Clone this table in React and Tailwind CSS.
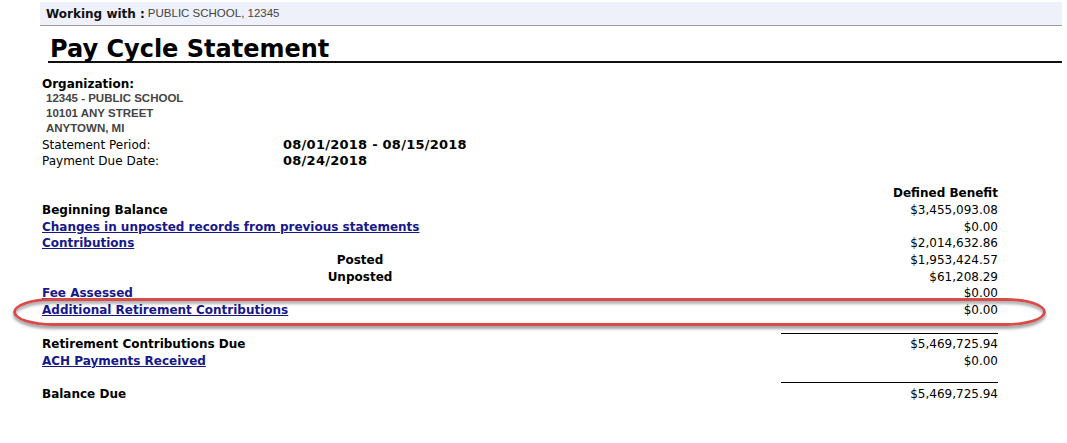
export default function App() {
  const verdana = "font-['DejaVu_Sans',Verdana,sans-serif]";
  const arial = "font-['Liberation_Sans',Arial,sans-serif]";
  const link = "text-[#17178c] underline font-bold";

  const rows = [
    { label: "Beginning Balance", amount: "$3,455,093.08" },
    { label: "Changes in unposted records from previous statements", amount: "$0.00", link: true },
    { label: "Contributions", amount: "$2,014,632.86", link: true },
    { label: "Posted", amount: "$1,953,424.57", sub: true },
    { label: "Unposted", amount: "$61,208.29", sub: true },
    { label: "Fee Assessed", amount: "$0.00", link: true },
    { label: "Additional Retirement Contributions", amount: "$0.00", link: true },
  ];

  return (
    <div className={`relative w-[1067px] h-[443px] bg-white text-black overflow-hidden ${verdana}`}>
      {/* Working with bar */}
      <div className="mt-[2px] ml-[40px] w-[1022px] h-[24px] bg-[#eef0fa] border-b border-[#9a9aa0] flex items-center pl-[6px] pt-[1px]">
        <span className="text-[12px] font-bold text-[#111]">Working with :</span>
        <span className={`ml-[3px] text-[11.5px] text-[#444] ${arial}`}>PUBLIC SCHOOL, 12345</span>
      </div>

      {/* Title */}
      <div className="ml-[48px] w-[1014px] mt-[9px] border-b-2 border-[#111] pl-[2px] h-[28px] flex items-end">
        <h1 className="text-[24px] font-bold leading-[28px] translate-y-[2px]">Pay Cycle Statement</h1>
      </div>

      {/* Organization */}
      <div className="ml-[42px] mt-[14px] text-[12px]">
        <div className="font-bold leading-[14px] h-[14px]">Organization:</div>
        <div className={`pl-[4px] text-[11.5px] font-bold text-[#444] leading-[15px] ${arial}`}>
          <div>12345 - PUBLIC SCHOOL</div>
          <div>10101 ANY STREET</div>
          <div>ANYTOWN, MI</div>
        </div>
        <div className="flex items-center leading-[16px] h-[16px] mt-[1px]">
          <span className="w-[241px]">Statement Period:</span>
          <span className="font-bold text-[13px] tracking-[0.25px]">08/01/2018 - 08/15/2018</span>
        </div>
        <div className="flex items-center leading-[16px] h-[16px]">
          <span className="w-[241px]">Payment Due Date:</span>
          <span className="font-bold text-[13px] tracking-[0.25px]">08/24/2018</span>
        </div>
      </div>

      {/* Balances */}
      <div className="ml-[42px] w-[956px] mt-[16px] text-[12px]">
        <div className="flex justify-end h-[17px] leading-[17px] font-bold">Defined Benefit</div>
        {rows.map((r) => (
          <div key={r.label} className="flex h-[16.7px] leading-[17px]">
            {r.sub ? (
              <span className="w-[636px] text-center font-bold">{r.label}</span>
            ) : (
              <span className={r.link ? link : "font-bold"}>{r.label}</span>
            )}
            <span className="ml-auto">{r.amount}</span>
          </div>
        ))}
        <div className="flex justify-end h-[17px]">
          <div className="w-[217px] mt-[14px] border-b border-black h-[1px]" />
        </div>
        <div className="flex h-[17px] leading-[17px]">
          <span className="font-bold">Retirement Contributions Due</span>
          <span className="ml-auto">$5,469,725.94</span>
        </div>
        <div className="flex h-[17px] leading-[17px]">
          <span className={link}>ACH Payments Received</span>
          <span className="ml-auto">$0.00</span>
        </div>
        <div className="flex justify-end h-[16px]">
          <div className="w-[217px] mt-[12px] border-b border-black h-[1px]" />
        </div>
        <div className="flex h-[17px] leading-[17px]">
          <span className="font-bold">Balance Due</span>
          <span className="ml-auto">$5,469,725.94</span>
        </div>
      </div>

      {/* Red highlight annotation */}
      <div className="absolute left-[13px] top-[298px] w-[1033px] h-[28px] rounded-[40px/14px] border-[3px] border-[#d84b4b] shadow-[0_3px_3px_rgba(0,0,0,0.35),inset_0_3px_3px_rgba(0,0,0,0.3)]" />
    </div>
  );
}
